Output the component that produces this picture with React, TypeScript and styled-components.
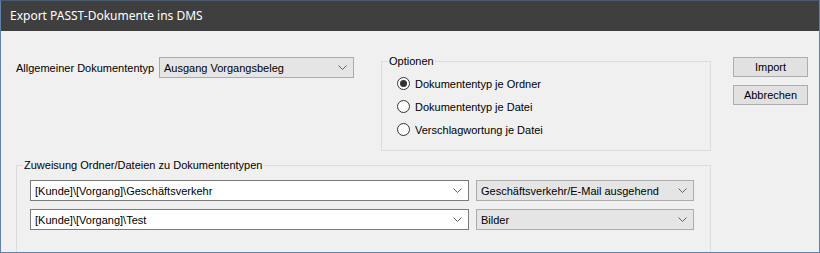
import React from "react";
import styled, { createGlobalStyle } from "styled-components";

const GlobalStyle = createGlobalStyle`
  html, body { margin: 0; padding: 0; background: #f0f0f0; }
  * { box-sizing: border-box; }
`;

const Window = styled.div`
  width: 820px;
  height: 253px;
  border: 1px solid #5f82ab;
  border-top-color: #4a5a6e;
  background: #f0f0f0;
  overflow: hidden;
  display: flex;
  flex-direction: column;
  font-family: "Liberation Sans", Arial, sans-serif;
  font-size: 11px;
  color: #000;
`;

const TitleBar = styled.div`
  height: 30px;
  flex: none;
  background: #3f3f3f;
  color: #ffffff;
  display: flex;
  align-items: center;
  padding-left: 9px;
  font-family: "Noto Sans", "Open Sans", sans-serif;
  font-size: 12px;
  padding-bottom: 1px;
`;

const Body = styled.div`
  flex: 1;
  padding: 26px 0 0 15px;
  display: flex;
  flex-direction: column;
`;

const TopRow = styled.div`
  display: flex;
  align-items: flex-start;
`;

const FieldRow = styled.div`
  display: flex;
  align-items: center;
  width: 365px;
`;

const FieldLabel = styled.span`
  width: 143px;
  flex: none;
  white-space: nowrap;
`;

const Combo = styled.div<{ $w: number; $editable?: boolean }>`
  width: ${(p) => p.$w}px;
  height: 21px;
  flex: none;
  display: flex;
  align-items: center;
  justify-content: space-between;
  padding: 0 6px 0 4px;
  background: ${(p) => (p.$editable ? "#ffffff" : "#e5e5e5")};
  border: 1px solid ${(p) => (p.$editable ? "#7a7a7a" : "#acacac")};
  white-space: nowrap;
`;

const Chevron = () => (
  <svg width="9" height="5" viewBox="0 0 9 5" style={{ flex: "none" }}>
    <path d="M0.5 0.5 L4.5 4.5 L8.5 0.5" fill="none" stroke="#606060" strokeWidth="1" />
  </svg>
);

const GroupBox = styled.div<{ $w: number; $h: number; $mt: number }>`
  position: relative;
  width: ${(p) => p.$w}px;
  height: ${(p) => p.$h}px;
  margin-top: ${(p) => p.$mt}px;
  border: 1px solid #dcdcdc;
  flex: none;
`;

const Legend = styled.span`
  position: absolute;
  top: -8px;
  left: 6px;
  padding: 0 1px;
  background: #f0f0f0;
  line-height: 14px;
`;

const RadioList = styled.div`
  display: flex;
  flex-direction: column;
  gap: 10px;
  padding: 15px 0 0 15px;
`;

const RadioRow = styled.label`
  display: flex;
  align-items: center;
  gap: 5px;
  height: 13px;
`;

const RadioCircle = styled.span<{ $checked?: boolean }>`
  width: 13px;
  height: 13px;
  border-radius: 50%;
  border: 1px solid #333333;
  background: #ffffff;
  display: flex;
  align-items: center;
  justify-content: center;
  &::after {
    content: "";
    width: 7px;
    height: 7px;
    border-radius: 50%;
    background: ${(p) => (p.$checked ? "#333333" : "transparent")};
  }
`;

const ButtonCol = styled.div`
  display: flex;
  flex-direction: column;
  gap: 8px;
  margin-left: 22px;
  margin-top: 0;
`;

const Button = styled.div`
  width: 75px;
  height: 20px;
  background: #e1e1e1;
  border: 1px solid #adadad;
  display: flex;
  align-items: center;
  justify-content: center;
`;

const AssignList = styled.div`
  display: flex;
  flex-direction: column;
  gap: 8px;
  padding: 14px 0 0 13px;
`;

const AssignRow = styled.div`
  display: flex;
  gap: 7px;
`;

const options = [
  { label: "Dokumententyp je Ordner", checked: true },
  { label: "Dokumententyp je Datei", checked: false },
  { label: "Verschlagwortung je Datei", checked: false },
];

const rows = [
  { path: "[Kunde]\\[Vorgang]\\Geschäftsverkehr", type: "Geschäftsverkehr/E-Mail ausgehend" },
  { path: "[Kunde]\\[Vorgang]\\Test", type: "Bilder" },
];

export default function App() {
  return (
    <>
      <GlobalStyle />
      <Window>
        <TitleBar>Export PASST-Dokumente ins DMS</TitleBar>
        <Body>
          <TopRow>
            <FieldRow>
              <FieldLabel>Allgemeiner Dokumententyp</FieldLabel>
              <Combo $w={195}>
                <span>Ausgang Vorgangsbeleg</span>
                <Chevron />
              </Combo>
            </FieldRow>
            <GroupBox $w={330} $h={90} $mt={4}>
              <Legend>Optionen</Legend>
              <RadioList>
                {options.map((o) => (
                  <RadioRow key={o.label}>
                    <RadioCircle $checked={o.checked} />
                    <span>{o.label}</span>
                  </RadioRow>
                ))}
              </RadioList>
            </GroupBox>
            <ButtonCol>
              <Button>Import</Button>
              <Button>Abbrechen</Button>
            </ButtonCol>
          </TopRow>
          <GroupBox $w={695} $h={110} $mt={14}>
            <Legend>Zuweisung Ordner/Dateien zu Dokumententypen</Legend>
            <AssignList>
              {rows.map((r) => (
                <AssignRow key={r.path}>
                  <Combo $w={439} $editable>
                    <span>{r.path}</span>
                    <Chevron />
                  </Combo>
                  <Combo $w={218}>
                    <span>{r.type}</span>
                    <Chevron />
                  </Combo>
                </AssignRow>
              ))}
            </AssignList>
          </GroupBox>
        </Body>
      </Window>
    </>
  );
}
